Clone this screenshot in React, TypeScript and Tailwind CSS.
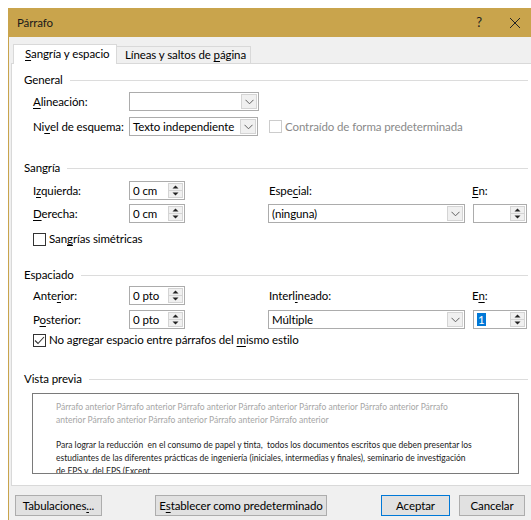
import React from "react";

// accelerator letter, underlined the way Win32 dialogs show it
const U = ({ children }: { children: React.ReactNode }) => (
  <span className="underline underline-offset-2 decoration-1">{children}</span>
);

const GroupTitle = ({ children }: { children: React.ReactNode }) => (
  <div className="flex items-center h-[16px]">
    <span>{children}</span>
    <div className="flex-1 h-px bg-[#dcdcdc] ml-[7px]" />
  </div>
);

const Chevron = () => (
  <svg width="9" height="6" viewBox="0 0 9 6">
    <path d="M0.5 0.8 L4.5 4.8 L8.5 0.8" fill="none" stroke="#606060" strokeWidth="1" />
  </svg>
);

const Combo = ({ value, className }: { value?: string; className: string }) => (
  <div className={`flex h-[19px] border border-[#acacac] bg-white ${className}`}>
    <div className="flex-1 pl-[3px] leading-[17px] whitespace-nowrap overflow-hidden">{value}</div>
    <div className="w-[16px] m-[1px] bg-[#f0f0f0] border border-[#d4d4d4] flex items-center justify-center">
      <Chevron />
    </div>
  </div>
);

const Spin = ({ value, className, selected }: { value?: string; className: string; selected?: boolean }) => (
  <div className={`flex h-[19px] border border-[#acacac] bg-white ${className}`}>
    <div className="flex-1 pl-[3px] leading-[17px] whitespace-nowrap">
      {selected ? <span className="bg-[#0078d7] text-white px-px">{value}</span> : value}
    </div>
    <div className="w-[15px] my-[1px] mr-[1px] flex flex-col border border-[#d4d4d4] bg-[#f0f0f0]">
      <div className="flex-1 flex items-center justify-center border-b border-[#d4d4d4]">
        <svg width="7" height="4" viewBox="0 0 7 4">
          <path d="M0.5 3.5 L3.5 0.5 L6.5 3.5 Z" fill="#222" />
        </svg>
      </div>
      <div className="flex-1 flex items-center justify-center">
        <svg width="7" height="4" viewBox="0 0 7 4">
          <path d="M0.5 0.5 L3.5 3.5 L6.5 0.5 Z" fill="#222" />
        </svg>
      </div>
    </div>
  </div>
);

const Check = ({ checked, disabled }: { checked?: boolean; disabled?: boolean }) => (
  <div
    className={`w-[13px] h-[13px] border bg-white flex items-center justify-center ${
      disabled ? "border-[#cccccc]" : "border-[#333333]"
    }`}
  >
    {checked && (
      <svg width="11" height="9" viewBox="0 0 11 9">
        <path d="M1 4.5 L4 7.5 L10 1" fill="none" stroke="#333" strokeWidth="1.1" />
      </svg>
    )}
  </div>
);

const Button = ({ children, className }: { children: React.ReactNode; className: string }) => (
  <div className={`h-[21px] flex items-center justify-center whitespace-nowrap bg-[#e1e1e1] border ${className}`}>
    {children}
  </div>
);

const App = () => {
  return (
    <div className="w-[531px] h-[520px] bg-white pt-2 pl-2 overflow-hidden font-['Segoe_UI','Lato',sans-serif] text-[11.5px] tracking-[-0.1px] text-black">
      <div className="h-[512px] border-l border-[#c9a44c] bg-[#f0f0f0] overflow-hidden">
        {/* title bar */}
        <div className="h-[29px] bg-[#c9a44c] flex items-center pl-[8px] pr-[8px]">
          <span className="flex-1 text-[#1a1a1a]">Párrafo</span>
          <span className="mr-[27px] text-[13px] text-[#222]">?</span>
          <svg width="12" height="12" viewBox="0 0 12 12" className="mr-[2px]">
            <path d="M1 1 L11 11 M11 1 L1 11" stroke="#222" strokeWidth="1" />
          </svg>
        </div>

        <div className="pl-[2px]">
          {/* tabs */}
          <div className="h-[26px] flex items-end pl-[2px] whitespace-nowrap">
            <div className="relative z-10 h-[20px] -mb-px w-[104px] pl-[11px] bg-white border border-b-0 border-[#d9d9d9] leading-[18px]">
              <U>S</U>angría y espacio
            </div>
            <div className="h-[17px] w-[134px] pl-[8px] border border-b-0 border-l-0 border-[#d9d9d9] leading-[16px]">
              Líneas y saltos de <U>p</U>ágina
            </div>
          </div>

          {/* tab page */}
          <div className="w-[540px] h-[423px] border border-[#d9d9d9] bg-white pl-[12px] pt-[8px] whitespace-nowrap">
            <div className="w-[504px]">
              <GroupTitle>General</GroupTitle>

              <div className="flex items-center mt-[4px] pl-[9px]">
                <span className="w-[96px]">
                  <U>A</U>lineación:
                </span>
                <Combo className="w-[130px]" />
              </div>
              <div className="flex items-center mt-[6px] pl-[9px]">
                <span className="w-[96px]">
                  Ni<U>v</U>el de esquema:
                </span>
                <Combo value="Texto independiente" className="w-[129px]" />
                <div className="ml-[11px]">
                  <Check disabled />
                </div>
                <span className="ml-[3px] text-[#8a8a8a]">Contraído de forma predeterminada</span>
              </div>

              <div className="mt-[24px]">
                <GroupTitle>Sangría</GroupTitle>
              </div>
              <div className="flex items-center mt-[5px] pl-[9px]">
                <span className="w-[96px]">
                  I<U>z</U>quierda:
                </span>
                <Spin value="0 cm" className="w-[56px]" />
                <span className="ml-[84px] w-[203px]">
                  Espe<U>c</U>ial:
                </span>
                <span>
                  <U>E</U>n:
                </span>
              </div>
              <div className="flex items-center mt-[4px] pl-[9px]">
                <span className="w-[96px]">
                  <U>D</U>erecha:
                </span>
                <Spin value="0 cm" className="w-[56px]" />
                <Combo value="(ninguna)" className="ml-[83px] w-[197px]" />
                <Spin className="ml-[8px] w-[54px]" />
              </div>
              <div className="flex items-center mt-[9px] pl-[9px] h-[14px]">
                <Check />
                <span className="ml-[3px]">
                  San<U>g</U>rías simétricas
                </span>
              </div>

              <div className="mt-[21px]">
                <GroupTitle>Espaciado</GroupTitle>
              </div>
              <div className="flex items-center mt-[3px] pl-[9px]">
                <span className="w-[96px]">
                  Ante<U>r</U>ior:
                </span>
                <Spin value="0 pto" className="w-[56px]" />
                <span className="ml-[84px] w-[203px]">
                  Interl<U>i</U>neado:
                </span>
                <span>
                  E<U>n</U>:
                </span>
              </div>
              <div className="flex items-center mt-[5px] pl-[9px]">
                <span className="w-[96px]">
                  P<U>o</U>sterior:
                </span>
                <Spin value="0 pto" className="w-[56px]" />
                <Combo value="Múltiple" className="ml-[83px] w-[197px]" />
                <Spin value="1" selected className="ml-[8px] w-[54px]" />
              </div>
              <div className="flex items-center mt-[4px] pl-[9px] h-[14px]">
                <Check checked />
                <span className="ml-[3px]">
                  No agregar espacio entre párrafos del <U>m</U>ismo estilo
                </span>
              </div>

              <div className="mt-[24px]">
                <GroupTitle>Vista previa</GroupTitle>
              </div>
              {/* preview box */}
              <div className="ml-[8px] mt-[6px] w-[487px] h-[81px] border border-[#7a7a7a] overflow-hidden pl-[23px] pt-[7px] font-['Lato',sans-serif] text-[8.5px] tracking-normal leading-[13px]">
                <div className="text-[#a6a6a6]">
                  <div>
                    Párrafo anterior Párrafo anterior Párrafo anterior Párrafo anterior Párrafo anterior Párrafo anterior Párrafo
                  </div>
                  <div>anterior Párrafo anterior Párrafo anterior Párrafo anterior Párrafo anterior</div>
                </div>
                <div className="mt-[12px] text-[#222]">
                  <div>
                    Para lograr la reducción&nbsp; en el consumo de papel y tinta,&nbsp; todos los documentos escritos que deben presentar los
                  </div>
                  <div>
                    estudiantes de las diferentes prácticas de ingeniería (iniciales, intermedias y finales), seminario de investigación
                  </div>
                  <div>de EPS y&nbsp; del EPS (Excent</div>
                </div>
              </div>
            </div>
          </div>

          {/* dialog buttons */}
          <div className="flex items-center mt-[9px] pl-[4px]">
            <Button className="w-[87px] border-[#adadad]">
              <span>
                Tabulaciones<U>.</U>..
              </span>
            </Button>
            <Button className="ml-[53px] w-[172px] border-[#adadad]">
              <span>
                E<U>s</U>tablecer como predeterminado
              </span>
            </Button>
            <Button className="ml-[54px] w-[69px] border-[#0078d7]">Aceptar</Button>
            <Button className="ml-[9px] w-[66px] border-[#adadad]">Cancelar</Button>
          </div>
        </div>
      </div>
    </div>
  );
};

export default App;
